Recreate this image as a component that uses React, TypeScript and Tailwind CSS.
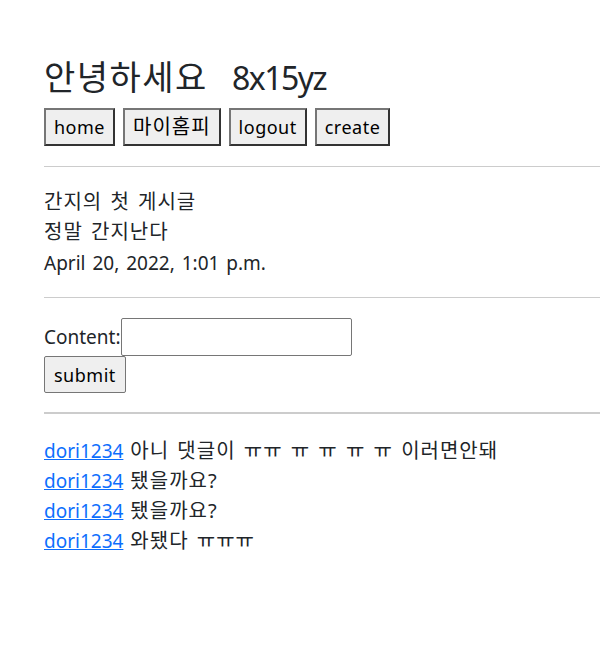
const comments = [
  { user: 'dori1234', text: '아니 댓글이 ㅠㅠ ㅠ ㅠ ㅠ ㅠ 이러면안돼' },
  { user: 'dori1234', text: '됐을까요?' },
  { user: 'dori1234', text: '됐을까요?' },
  { user: 'dori1234', text: '와됐다 ㅠㅠㅠ' },
];

const navButtons = [
  { label: 'home', ko: false },
  { label: '마이홈피', ko: true },
  { label: 'logout', ko: false },
  { label: 'create', ko: false },
];

// 한글은 글자를 조금 크게 + 자간 1px (원본 맑은고딕 폭에 맞춤)
const Ko = ({ children, className = 'text-[20px] tracking-[1px]' }: { children: React.ReactNode; className?: string }) => (
  <span className={`leading-none ${className}`}>{children}</span>
);

export default function App() {
  return (
    <div
      className="min-h-[647px] bg-white pl-[44px] text-[19px] leading-[30px] text-[#212529] [word-spacing:2px]"
      style={{ fontFamily: '"Noto Sans", "Noto Sans CJK KR", sans-serif' }}
    >
      <div className="pt-[52px]">
        <h1 className="h-[52px] text-[32px] leading-[52px] font-normal [word-spacing:0px]">
          <Ko className="text-[34px] tracking-[1.5px]">안녕하세요</Ko>
          <span className="ml-[24px] tracking-[-1.5px]">8x15yz</span>
        </h1>
        <div className="mt-[4px] flex gap-[8px]">
          {navButtons.map((b) => (
            <button
              key={b.label}
              className="h-[38px] border-2 border-t-[#767676] border-l-[#767676] border-r-[#333] border-b-[#333] bg-[#efefef] px-[8px] text-[18px] leading-none tracking-[0.5px] text-black"
            >
              {b.ko ? <Ko>{b.label}</Ko> : b.label}
            </button>
          ))}
        </div>
      </div>

      <hr className="mt-[20px] border-t border-[#ccc]" />

      <div className="pt-[20px]">
        <div className="h-[30px]">
          <Ko>간지의 첫 게시글</Ko>
        </div>
        <div className="h-[30px]">
          <Ko>정말 간지난다</Ko>
        </div>
        <div className="mt-[1px] h-[30px]">April 20, 2022, 1:01 p.m.</div>
      </div>

      <hr className="mt-[19px] border-t border-[#ccc]" />

      <form className="pt-[20px]" onSubmit={(e) => e.preventDefault()}>
        <div className="flex items-center">
          <label className="leading-[30px]">Content:</label>
          <input
            type="text"
            className="h-[38px] w-[231px] rounded-[2px] border border-[#767676] bg-white px-2"
          />
        </div>
        <button
          type="submit"
          className="h-[37px] rounded-[2px] border border-[#767676] bg-[#efefef] px-[9px] text-[18px] leading-none tracking-[0.5px] text-black"
        >
          submit
        </button>
      </form>

      <hr className="mt-[19px] border-t-2 border-[#ccc]" />

      <div className="pt-[22px]">
        {comments.map((c, i) => (
          <div key={i} className="h-[30px]">
            <a href="#" className="text-[#0d6efd] underline">
              {c.user}
            </a>{' '}
            <Ko>{c.text}</Ko>
          </div>
        ))}
      </div>
    </div>
  );
}
